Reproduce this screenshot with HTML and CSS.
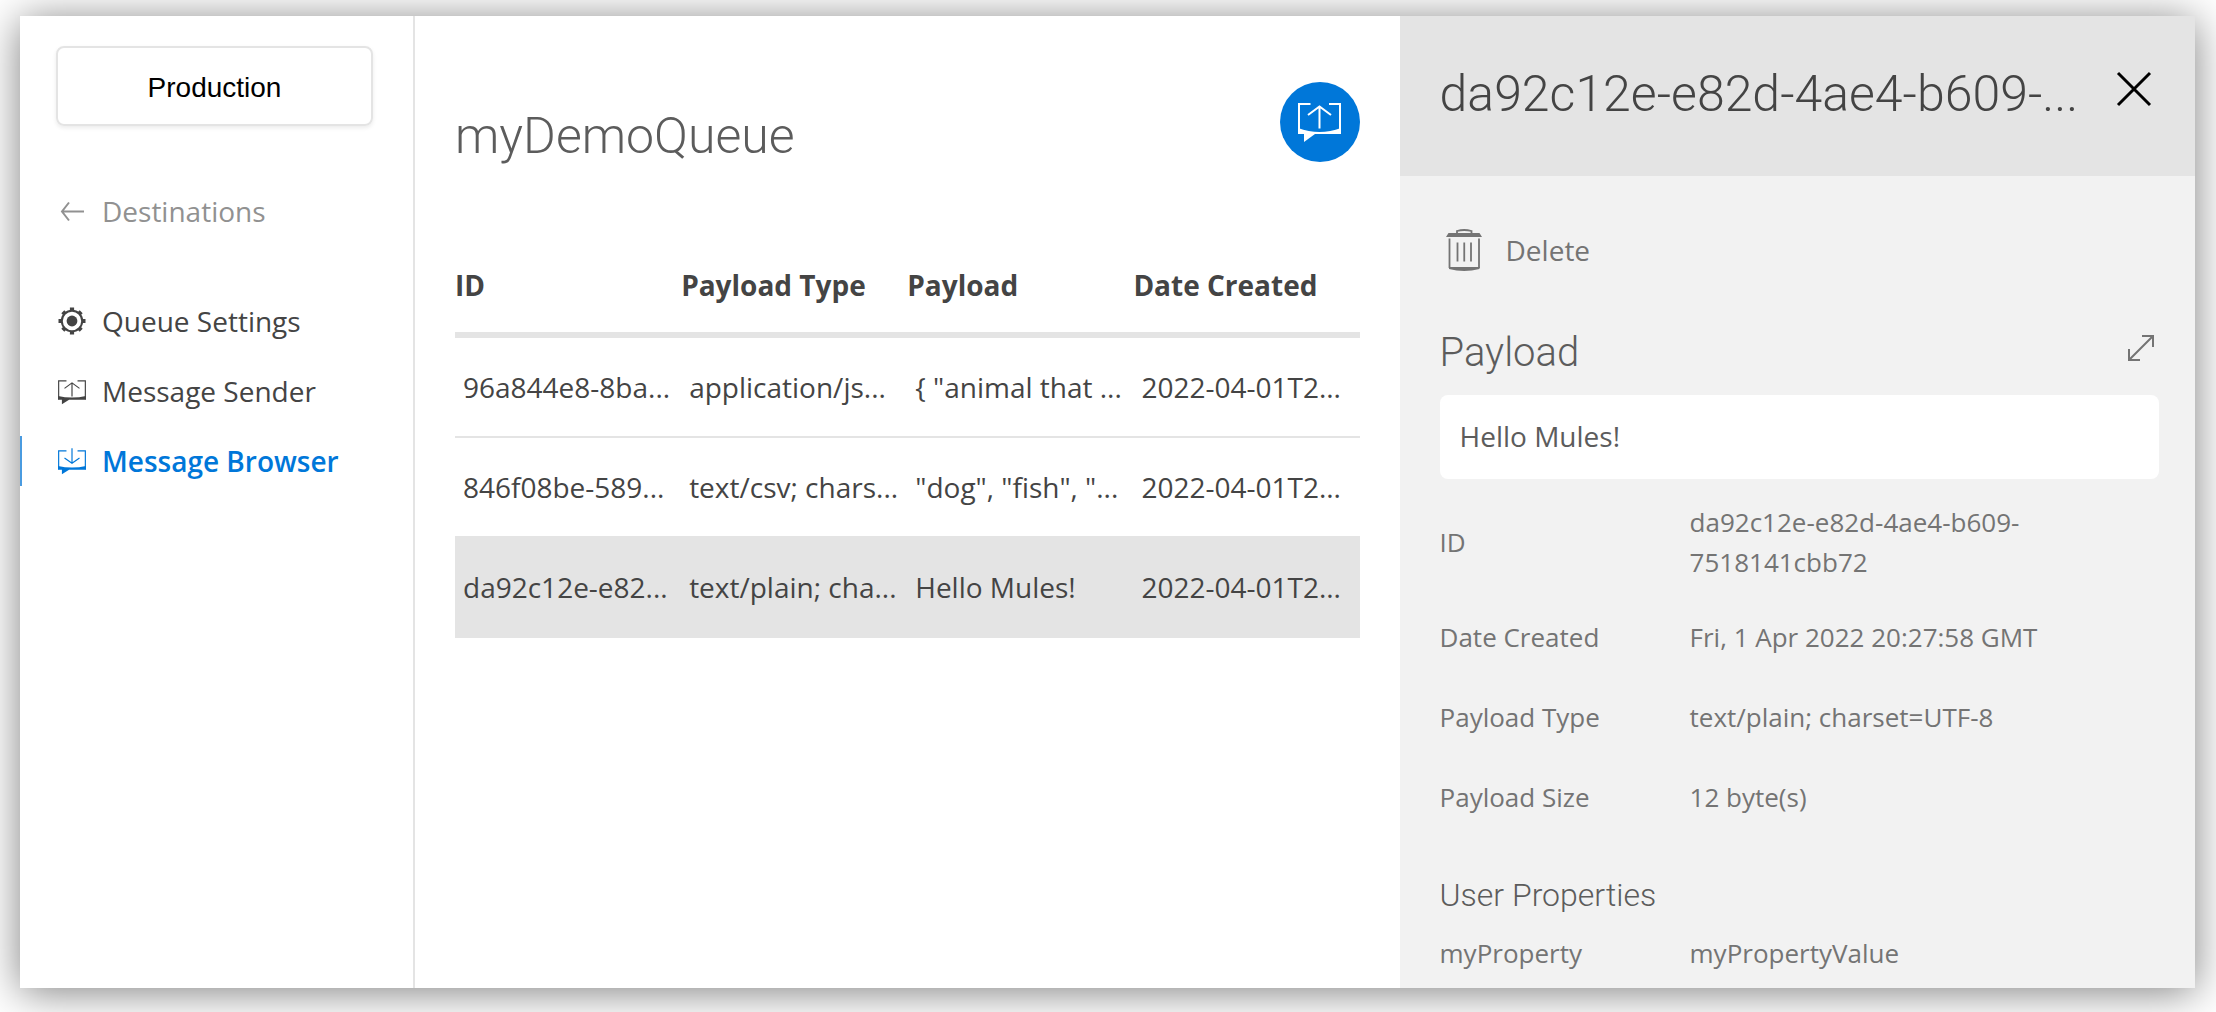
FILE: index.html
```html
<!DOCTYPE html>
<html lang="en">
<head>
  <meta charset="utf-8">
  <meta name="viewport" content="width=device-width, initial-scale=1">
  <title>myDemoQueue - Message Browser</title>
  <link rel="stylesheet" href="styles.css">
</head>
<body>
  <div class="app">
    <aside class="sidebar">
      <button class="env-button" type="button">Production</button>
      <nav class="nav">
        <a class="nav-link nav-back" href="#destinations">
          <svg class="nav-icon" viewBox="0 0 28 28" fill="none" stroke="currentColor" stroke-width="2" aria-hidden="true"><path d="M26 14.500H4M11 5.500L4 14.500L11 23.500"/></svg>
          Destinations
        </a>
        <a class="nav-link" href="#settings">
          <svg class="nav-icon" viewBox="0 0 28 28" aria-hidden="true">
            <circle cx="14" cy="14" r="10.2" fill="none" stroke="currentColor" stroke-width="2"/>
            <circle cx="14" cy="14" r="5.4" fill="currentColor"/>
            <path d="M14 0.5V4M14 24V27.500M0.500 14H4M24 14H27.500M4.800 4.800L6.800 6.800M21.200 21.200L23.200 23.200M4.800 23.200L6.800 21.200M21.200 6.800L23.200 4.800" fill="none" stroke="currentColor" stroke-width="4.200"/>
          </svg>
          Queue Settings
        </a>
        <a class="nav-link" href="#sender">
          <svg class="nav-icon" viewBox="0 -3 43 43" aria-hidden="true">
            <path d="M13 3H1V31M30 3H42V31M21.500 27V6M10 14.500L21.500 6L33 14.500" fill="none" stroke="currentColor" stroke-width="1.800"/>
            <path d="M0 26Q21.500 31 43 26V32H17L6 39V32H0Z" fill="currentColor"/>
          </svg>
          Message Sender
        </a>
        <a class="nav-link nav-active" href="#browser" aria-current="page">
          <svg class="nav-icon" viewBox="0 -3 43 43" aria-hidden="true">
            <path d="M13 3H1V31M30 3H42V31M21.500 -1V22M10 14L21.500 22L33 14" fill="none" stroke="currentColor" stroke-width="1.800"/>
            <path d="M0 26Q21.500 31 43 26V32H17L6 39V32H0Z" fill="currentColor"/>
          </svg>
          Message Browser
        </a>
      </nav>
    </aside>

    <main class="main">
      <header class="main-header">
        <h1 class="main-title">myDemoQueue</h1>
        <button class="send-button" type="button" aria-label="Get messages">
          <svg class="send-icon" viewBox="0 0 43 39" aria-hidden="true">
            <path d="M12.500 1H1V31M31 1H42V31M21.500 25.500V3M10 12L21.500 3.500L33 12" fill="none" stroke="currentColor" stroke-width="2"/>
            <path d="M0 25Q21.500 33 43 25V31H17L6 39V31H0Z" fill="currentColor"/>
          </svg>
        </button>
      </header>
      <table class="messages">
        <thead>
          <tr><th scope="col">ID</th><th scope="col">Payload Type</th><th scope="col">Payload</th><th scope="col">Date Created</th></tr>
        </thead>
        <tbody>
          <tr><td>96a844e8-8ba...</td><td>application/js...</td><td>{ "animal that ...</td><td>2022-04-01T2...</td></tr>
          <tr><td>846f08be-589...</td><td>text/csv; chars...</td><td>"dog", "fish", "...</td><td>2022-04-01T2...</td></tr>
          <tr class="selected"><td>da92c12e-e82...</td><td>text/plain; cha...</td><td>Hello Mules!</td><td>2022-04-01T2...</td></tr>
        </tbody>
      </table>
    </main>

    <section class="detail" aria-labelledby="detail-title">
      <header class="detail-header">
        <h2 class="detail-title" id="detail-title">da92c12e-e82d-4ae4-b609-...</h2>
        <button class="icon-button" type="button" aria-label="Close">
          <svg class="close-icon" viewBox="0 0 34 34" fill="none" stroke="currentColor" stroke-width="3" aria-hidden="true"><path d="M1 1L33 33M33 1L1 33"/></svg>
        </button>
      </header>
      <div class="detail-body">
        <button class="delete-button" type="button">
          <svg class="trash-icon" viewBox="0 0 36 42" aria-hidden="true">
            <path d="M11 4V2Q18 0 25.500 2V4M3.500 9.500V39M33 9.500V39M11.500 13.500V32.500M18.250 13.500V32.500M25 13.500V32.500" fill="none" stroke="currentColor" stroke-width="1.800"/>
            <path d="M2.500 4H33.500L36 8H0ZM3 38H33.500V40Q18 44 3 40Z" fill="currentColor"/>
          </svg>
          Delete
        </button>
        <div class="payload-header">
          <h3 class="payload-title">Payload</h3>
          <button class="icon-button" type="button" aria-label="Expand payload">
            <svg class="expand-icon" viewBox="0 0 26 26" fill="none" stroke="currentColor" stroke-width="2" aria-hidden="true"><path d="M1 25L25 1M14 1H25V12M1 14V25H12"/></svg>
          </button>
        </div>
        <div class="payload-box">Hello Mules!</div>
        <dl class="props">
          <div class="prop"><dt>ID</dt><dd>da92c12e-e82d-4ae4-b609-7518141cbb72</dd></div>
          <div class="prop"><dt>Date Created</dt><dd>Fri, 1 Apr 2022 20:27:58 GMT</dd></div>
          <div class="prop"><dt>Payload Type</dt><dd>text/plain; charset=UTF-8</dd></div>
          <div class="prop"><dt>Payload Size</dt><dd>12 byte(s)</dd></div>
        </dl>
        <h3 class="user-title">User Properties</h3>
        <dl class="props">
          <div class="prop"><dt>myProperty</dt><dd>myPropertyValue</dd></div>
        </dl>
      </div>
    </section>
  </div>
</body>
</html>
```
FILE: styles.css
```css
* {
  box-sizing: border-box;
}

body {
  margin: 0;
  padding: 16px 21px 24px 20px;
  background: #fff;
  color: #444;
  font-family: "Open Sans", sans-serif;
  font-size: 28px;
  line-height: 40px;
}

h1,
h2,
h3,
dl,
dd {
  margin: 0;
}

h1,
h2,
h3 {
  font-family: Roboto, sans-serif;
  font-weight: 300;
  white-space: nowrap;
}

button {
  padding: 0;
  border: 0;
  background: none;
  color: inherit;
  font: inherit;
  cursor: pointer;
}

svg {
  display: block;
  flex: none;
  overflow: visible;
}

.app {
  display: grid;
  grid-template-columns: 395px minmax(0, 984fr) minmax(0, 795fr);
  height: calc(100vh - 40px);
  background: #fff;
  box-shadow: 0 4px 40px rgba(0, 0, 0, 0.5);
}

/* Sidebar */
.sidebar {
  padding-top: 30px;
  border-right: 2px solid #e4e4e4;
}

.env-button {
  display: block;
  width: 317px;
  height: 80px;
  margin: 0 36px 50px;
  padding-top: 3px;
  border: 2px solid #e4e4e4;
  border-radius: 8px;
  box-shadow: 0 2px 4px rgba(0, 0, 0, 0.08);
  color: #000;
  font-family: "Liberation Sans", Arial, sans-serif;
}

.nav {
  display: flex;
  flex-direction: column;
  gap: 20px;
}

.nav-link {
  display: flex;
  align-items: center;
  gap: 16px;
  height: 50px;
  padding-left: 36px;
  border-left: 2px solid transparent;
  color: #444;
  text-decoration: none;
}

.nav-icon {
  width: 28px;
  height: 28px;
}

.nav-back {
  height: 70px;
  margin-bottom: 30px;
  color: #919191;
}

.nav-active {
  border-color: #4a9be0;
  color: #0077d9;
  font-weight: 600;
}

/* Message list */
.main {
  padding: 66px 40px 0;
}

.main-header {
  display: flex;
  align-items: center;
  justify-content: space-between;
  height: 80px;
  margin-bottom: 78px;
}

.main-title {
  padding-top: 28px;
  color: #5c5c5c;
  font-size: 50px;
  line-height: 60px;
}

.send-button {
  display: grid;
  place-items: center;
  width: 80px;
  height: 80px;
  border-radius: 50%;
  background: #0077d9;
  color: #fff;
}

.send-icon {
  width: 43px;
  height: 39px;
}

.messages {
  width: 100%;
  border-collapse: separate;
  border-spacing: 0;
  table-layout: fixed;
}

.messages th {
  height: 98px;
  padding: 0 0 2px;
  border-bottom: 6px solid #e4e4e4;
  font-weight: 700;
  text-align: left;
}

.messages td {
  height: 100px;
  padding: 0 0 0 8px;
  border-bottom: 2px solid #e4e4e4;
  white-space: nowrap;
}

.selected td {
  background: #e4e4e4;
}

/* Message detail */
.detail {
  overflow: hidden;
  background: #f2f2f2;
  color: #747474;
}

.detail-header {
  display: flex;
  align-items: center;
  justify-content: space-between;
  height: 160px;
  padding: 0 44px 14px 40px;
  background: #e4e4e4;
  color: #000;
}

.detail-title {
  padding-top: 10px;
  color: #444;
  font-size: 50px;
  line-height: 60px;
}

.close-icon {
  width: 34px;
  height: 34px;
}

.detail-body {
  padding: 44px 36px 0 40px;
}

.delete-button {
  display: flex;
  align-items: center;
  gap: 24px;
  height: 60px;
  padding-left: 6px;
}

.trash-icon {
  width: 36px;
  height: 42px;
}

.payload-header {
  display: flex;
  align-items: center;
  justify-content: space-between;
  height: 60px;
  margin-top: 38px;
  padding-right: 5px;
}

.payload-title {
  padding-top: 10px;
  color: #5c5c5c;
  font-size: 40px;
  line-height: 60px;
}

.icon-button {
  flex: none;
}

.expand-icon {
  width: 26px;
  height: 26px;
}

.payload-box {
  margin: 17px 0 8px;
  padding: 21px 20px 23px;
  border-radius: 8px;
  background: #fff;
  color: #5c5c5c;
}

.props {
  font-size: 26px;
}

.prop {
  display: grid;
  grid-template-columns: 250px minmax(0, 1fr);
  align-items: center;
  min-height: 80px;
  padding: 15px 0;
}

.user-title {
  margin-top: 40px;
  color: #5c5c5c;
  font-size: 32px;
  line-height: 36px;
}
```
